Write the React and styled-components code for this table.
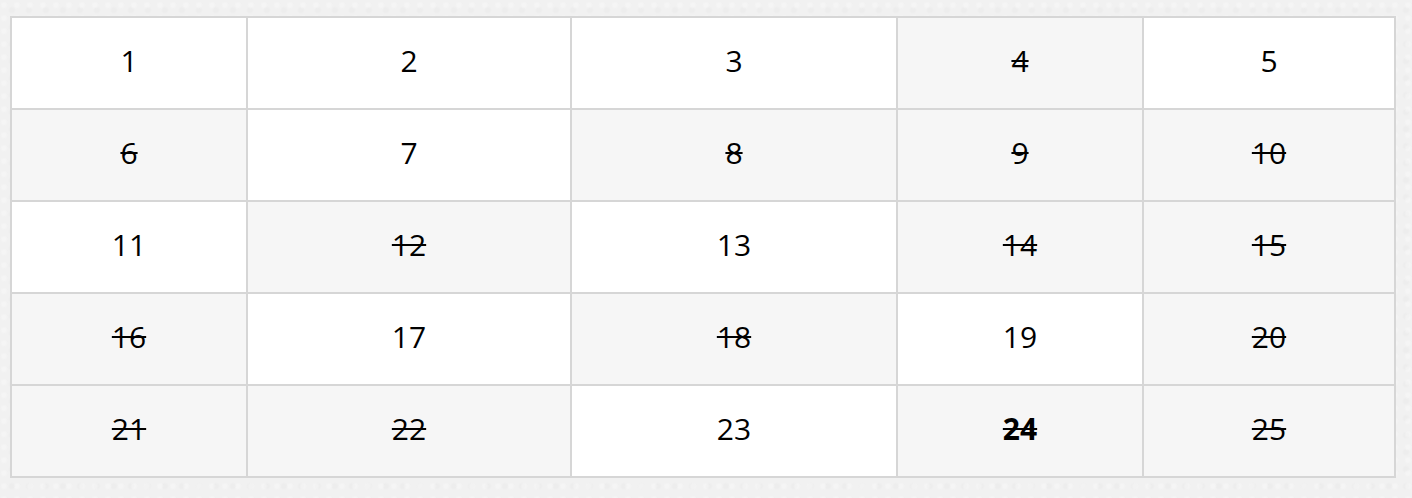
import React from "react";
import styled, { createGlobalStyle } from "styled-components";

const Global = createGlobalStyle`
  html, body { margin: 0; padding: 0; }
  body {
    background: #f1f1f1;
    font-family: "Open Sans", "Noto Sans", sans-serif;
  }
`;

const Page = styled.div`
  padding: 16px 0 0 10px;
  min-height: 498px;
  box-sizing: border-box;
  background-color: #f1f1f1;
  background-image:
    radial-gradient(circle at 30% 40%, rgba(255,255,255,0.25) 0 2px, transparent 4px),
    radial-gradient(circle at 70% 60%, rgba(0,0,0,0.015) 0 2px, transparent 4px);
  background-size: 13px 13px, 17px 17px;
`;

const Grid = styled.div`
  display: grid;
  grid-template-columns: 234px 322px 324px 244px 250px;
  grid-auto-rows: 90px;
  gap: 2px;
  padding: 2px;
  width: max-content;
  background: #d6d6d6;
`;

const Cell = styled.div`
  display: flex;
  align-items: center;
  justify-content: center;
  padding-bottom: 6px;
  box-sizing: border-box;
  background: ${(p) => (p.$struck ? "#f6f6f6" : "#ffffff")};
  color: #000;
  font-size: 30px;
  font-weight: ${(p) => (p.$bold ? 700 : 400)};
  text-decoration: ${(p) => (p.$struck ? "line-through" : "none")};
  text-decoration-thickness: 2px;
`;

const struck = new Set([4, 6, 8, 9, 10, 12, 14, 15, 16, 18, 20, 21, 22, 24, 25]);

export default function App() {
  const nums = Array.from({ length: 25 }, (_, i) => i + 1);
  return (
    <Page>
      <Global />
      <Grid>
        {nums.map((n) => (
          <Cell key={n} $struck={struck.has(n)} $bold={n === 24}>
            {n}
          </Cell>
        ))}
      </Grid>
    </Page>
  );
}
